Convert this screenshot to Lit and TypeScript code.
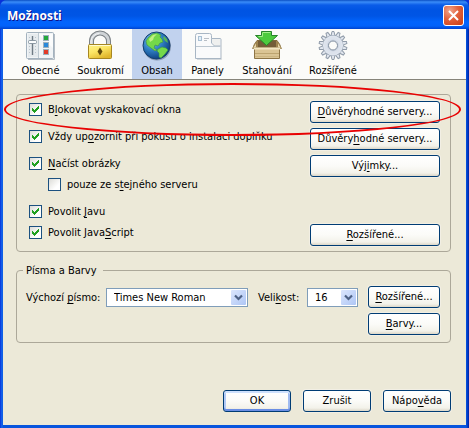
import { LitElement, html, css, svg, nothing } from "lit";
import { customElement, property, state } from "lit/decorators.js";
import { classMap } from "lit/directives/class-map.js";

/** Splits "Po_volit" style captions into text with an underlined access key. */
const caption = (text: string) => {
  const at = text.indexOf("_");
  if (at < 0) return html`${text}`;
  return html`${text.slice(0, at)}<u>${text[at + 1]}</u>${text.slice(at + 2)}`;
};

const icons: Record<string, unknown> = {
  general: svg`
    <path d="M3 29.500h26.500V4" fill="none" stroke="#b4bcc4"/>
    <rect x="1.500" y="2.500" width="27" height="26" rx="1" fill="#f1f4f6" stroke="#a3b2be"/>
    <path d="M3 4h10v23H3z" fill="#e6ebee"/>
    <path d="M13 4h15v14z" fill="#fff" opacity=".7"/>
    <path d="M13.500 3v25" stroke="#bcc8d0"/>
    <path d="M7.500 6v19" stroke="#6e7a84" stroke-width="1.400"/>
    <path d="M10.500 7v17M4.500 7v17" stroke="#bcc5cd" stroke-dasharray="1 2"/>
    <rect x="3.500" y="10.500" width="8" height="3" rx="1" fill="#fafcfd" stroke="#8b98a3"/>
    <g stroke="#9db0bd">
      <rect x="18.500" y="5.500" width="5" height="5" fill="#22a83c"/>
      <rect x="18.500" y="12.500" width="5" height="5" fill="#2888da"/>
      <rect x="18.500" y="19.500" width="5" height="5" fill="#e23a28"/>
    </g>`,
  privacy: svg`
    <defs><linearGradient id="gold" x2=".6" y2="1"><stop stop-color="#fff48c"/><stop offset=".5" stop-color="#fbe564"/><stop offset="1" stop-color="#e0b62c"/></linearGradient></defs>
    <path d="M6.500 15v-4a8.500 8 0 0 1 17 0v4" fill="none" stroke="#7b8185" stroke-width="5"/>
    <path d="M6.500 15v-4a8.500 8 0 0 1 17 0v4" fill="none" stroke="#cfd3d6" stroke-width="3"/>
    <path d="M6 14v-3a8.500 8 0 0 1 8.500-7.500" fill="none" stroke="#f3f5f6"/>
    <rect x="3.500" y="14.500" width="23" height="14" rx="1" fill="url(#gold)" stroke="#a78722"/>
    <path d="M4.500 15.500h21" stroke="#fffbd0"/>
    <path d="M15 17.500l2.500 4-2.500 4-2.500-4z" fill="#5e490c"/>`,
  content: svg`
    <defs><radialGradient id="sea" cx=".35" cy=".3" r=".75"><stop stop-color="#8cc6f2"/><stop offset=".5" stop-color="#2f7fc4"/><stop offset="1" stop-color="#0d3b7c"/></radialGradient></defs>
    <circle cx="16" cy="16.500" r="14" fill="#52617c" opacity=".5"/>
    <circle cx="15.500" cy="15.500" r="13.500" fill="url(#sea)" stroke="#14406f"/>
    <path d="M7 8l4-4 5-1 4 2-1 2 2 2 1 3-3 1-2 3-3-1-1 3 3 2-2 1-4-3-4-3-1-4z" fill="#74d84a" stroke="#3a9440" stroke-width=".6"/>
    <path d="M17 19l4-2 4 1 2 2-3 4-4 4-2-1v-4l-2-2z" fill="#74d84a" stroke="#3a9440" stroke-width=".6"/>
    <path d="M23 6l3 3 1 4-3-2-2-3z" fill="#58b458"/>
    <path d="M8 9l4-4 4-1-3 3-1 3-3 2z" fill="#d2f690" opacity=".8"/>`,
  tabs: svg`
    <path d="M3.500 28.500V5.500a2 2 0 0 1 2-2h12a2 2 0 0 1 2 2v3h8.500a1 1 0 0 1 1 1v19z" fill="#f9fafb" stroke="#a8b6c4"/>
    <path d="M20 9h8v7h-5l-3-3z" fill="#eff0ef"/>
    <path d="M19.500 8.500V13l3 3h6" fill="none" stroke="#a8b6c4"/>
    <path d="M4 16.500h24" stroke="#bcc7d0"/>
    <rect x="6.500" y="6.500" width="3" height="4" fill="#e4eff8" stroke="#a9c0d3"/>
    <path d="M12 8.500h5M12 10.500h3" stroke="#b8bec5"/>
    <path d="M5 29.500h24.500V11" fill="none" stroke="#d4d9dd"/>`,
  downloads: svg`
    <path d="M3 15L6 10.500h20l3 4.500v3H3z" fill="#a08450" stroke="#80683c"/>
    <path d="M7 11h18v7H7z" fill="#745d38"/>
    <path d="M3.500 17.500h25v11h-25z" fill="#dac494" stroke="#8d7446"/>
    <path d="M1.500 18.500l4-7v6zM30.500 18.500l-4-7v6z" fill="#e9d7aa" stroke="#9c834f"/>
    <path d="M3 18.500h26" stroke="#f2e6c2" stroke-width="2"/>
    <path d="M4 23.500h24" stroke="#bca470"/><path d="M4 26.500h24" stroke="#cbb582"/>
    <path d="M10.500 1.500h10v4h6L15.500 15.500 4.500 5.500h6z" fill="#4ccb3e" stroke="#27842b"/>
    <path d="M11.500 2.500h8M11.500 3v3.500H7.500" fill="none" stroke="#a2ef8a"/>`,
  advanced: svg`
    <g stroke="#909ba9" stroke-width="1">
      ${Array.from({ length: 14 }, (_, i) => svg`<path transform="rotate(${(i * 360) / 14} 16 15.500)" d="M14 6l1-4.500h2l1 4.500z" fill="#e2e7ef"/>`)}
    </g>
    <circle cx="16" cy="15.500" r="10" fill="#dce2ec" stroke="#9aa5b4"/>
    <circle cx="16" cy="15.500" r="9.300" fill="none" stroke="#dfe5ee" stroke-width="1.500"/>
    <circle cx="16" cy="15.500" r="6" fill="#cdd5e2"/>
    <circle cx="16" cy="15.500" r="4.500" fill="#fbfbf9" stroke="#8390a1"/>`,
};

const base = css`
  :host { box-sizing: border-box; }
  *, *::before, *::after { box-sizing: border-box; }
  u { text-decoration: underline; text-underline-offset: 2px; text-decoration-thickness: 1px; text-decoration-skip-ink: none; }
`;

@customElement("xp-button")
class XpButton extends LitElement {
  static styles = [
    base,
    css`
      :host { display: block; }
      .button {
        display: block; width: 100%; height: 22px; padding: 0 2px 1px;
        font: inherit; color: #000; text-align: center; white-space: nowrap;
        border: 1px solid #003c74; border-radius: 3px;
        background: linear-gradient(#fff, #fbfbf8 50%, #f3f2ea 85%, #dcd7c8);
        box-shadow: 0 0 0 1px #f2efe4;
      }
      .primary { box-shadow: inset 0 2px #cee0fc, inset 0 -2px #6a8ee4, inset 2px 0 #b1c9f5, inset -2px 0 #a0bbf0; }
    `,
  ];
  @property() label = "";
  @property({ type: Boolean }) primary = false;
  render() {
    return html`<button class=${classMap({ button: true, primary: this.primary })}>${caption(this.label)}</button>`;
  }
}

@customElement("xp-check")
class XpCheck extends LitElement {
  static styles = [
    base,
    css`
      :host { display: block; }
      .label { display: flex; align-items: center; gap: 6px; height: 13px; line-height: 13px; white-space: nowrap; }
      .wrap { position: relative; display: block; width: 13px; height: 13px; }
      .box {
        appearance: none; display: block; width: 13px; height: 13px; margin: 0;
        border: 1px solid #1c5180; background: linear-gradient(135deg, #dcdcd7, #fff 70%);
      }
      .tick { position: absolute; inset: 0; display: none; pointer-events: none; }
      .box:checked + .tick { display: block; }
    `,
  ];
  @property() label = "";
  @property({ type: Boolean }) checked = false;
  render() {
    return html`<label class="label">
      <span class="wrap">
        <input class="box" type="checkbox" .checked=${this.checked} />
        <svg class="tick" width="13" height="13" viewBox="0 0 13 13" shape-rendering="crispEdges"><path d="M3 5h1v1h1v1h1V6h1V5h1V4h1V3h1v3H9v1H8v1H7v1H6v1H5V9H4V8H3z" fill="#21a121" /></svg>
      </span>
      <span>${caption(this.label)}</span>
    </label>`;
  }
}

@customElement("xp-select")
class XpSelect extends LitElement {
  static styles = [
    base,
    css`
      :host { display: block; }
      .wrap { position: relative; }
      .select {
        appearance: none; display: block; width: 100%; height: 19px; padding: 0 18px 0 7px;
        font: inherit; color: #000; background: #fff; border: 1px solid #7f9db9; border-radius: 0;
      }
      .arrow { position: absolute; top: 2px; right: 2px; pointer-events: none; }
    `,
  ];
  @property() value = "";
  @property() name = "";
  render() {
    return html`<div class="wrap">
      <select class="select" aria-label=${this.name}><option>${this.value}</option></select>
      <svg class="arrow" width="15" height="15" viewBox="0 0 15 15">
        <defs><linearGradient id="f" x2="1" y2="1"><stop stop-color="#dbe6fd" /><stop offset="1" stop-color="#aec6f5" /></linearGradient></defs>
        <rect width="15" height="15" rx="1" fill="url(#f)" />
        <path d="M4 5.500l3.500 3.500L11 5.500" fill="none" stroke="#4d6185" stroke-width="2.200" />
      </svg>
    </div>`;
  }
}

interface Row { label: string; checked: boolean; button?: string; kind: string; }

@customElement("app-root")
class AppRoot extends LitElement {
  static styles = [
    base,
    css`
      :host {
        display: block; min-height: 100vh; background: #0831d9;
        font: 11px/13px "DejaVu Sans Condensed", "Noto Sans", sans-serif; color: #000;
      }
      .window {
        display: flex; flex-direction: column; min-height: 100vh; padding: 0 3px 3px;
        border-radius: 7px 7px 0 0;
        background: linear-gradient(90deg, #0831d9, #166aee 2px, #0855dd 3px, #0855dd calc(100% - 3px), #0046d5 calc(100% - 2px), #001ea0);
        border-bottom: 1px solid #00138c;
      }
      .title {
        display: flex; align-items: center; justify-content: space-between; height: 29px;
        margin: 0 -3px; padding: 2px 5px 0 7px; border-radius: 7px 7px 0 0;
        background: linear-gradient(#0b4fc4, #3a8cf8 2px, #0a5ce8 5px, #0054e3 10px, #0055e5 16px, #0264fd 22px, #0262fa 26px, #0043cf);
      }
      .name { margin: 0; color: #fff; font: bold 12px/16px "Open Sans", "Noto Sans", sans-serif; text-shadow: 1px 1px #0f1089; }
      .close {
        display: grid; place-items: center; width: 21px; height: 21px; padding: 0;
        border: 1px solid #fff; border-radius: 3px;
        background: radial-gradient(circle at 30% 25%, #f0a58c, #e2613c 45%, #c83c12);
      }
      .bar {
        display: grid; grid-template-columns: 57px 63px 50px 51px 68px 64px; justify-content: start;
        height: 51px; padding-left: 9px; background: #fbfbf9; border-bottom: 1px solid #86847a;
      }
      .tab {
        display: flex; flex-direction: column; align-items: center; gap: 2px; padding: 1px 0 0;
        border: 0; background: none; font: inherit; line-height: 14px; color: #000; white-space: nowrap;
      }
      .tab.on { background: #c1d2ee; }
      .body { position: relative; flex: 1; padding: 14px 15px 13px 13px; background: #ece9d8; }
      .group { margin: 0; padding: 0; border: 1px solid #aca899; border-radius: 4px; min-width: 0; }
      .options { padding: 6px 10px 5px 12px; }
      .row { display: flex; justify-content: space-between; align-items: flex-start; }
      .main { height: 22px; margin-bottom: 5px; }
      .last { height: 22px; }
      .check { margin-top: 2px; }
      .sub { margin: -4px 0 14px 19px; }
      .plain { margin-bottom: 6px; }
      .sub .check, .plain .check { margin-top: 0; }
      .wide { width: 130px; }
      .fonts { margin-top: 12px; padding: 0 10px 7px 9px; }
      .legend { margin-left: -3px; padding: 0 6px 0 3px; line-height: 13px; }
      .form { display: flex; justify-content: space-between; align-items: flex-start; padding-top: 9px; }
      .fields {
        display: grid; grid-template-columns: 70px 142px 39px 51px; column-gap: 10px;
        align-items: center; height: 22px; white-space: nowrap;
      }
      .stack { display: grid; gap: 5px; width: 72px; }
      .foot { display: flex; justify-content: flex-end; gap: 12px; margin-top: 47px; }
      .foot > * { width: 68px; }
      .ring {
        position: absolute; top: 3px; left: 1px; right: 5px; height: 53px;
        border: 2px solid #e80202; border-radius: 50%; pointer-events: none;
      }
    `,
  ];

  @state() private active = "content";

  private tabs = [
    ["general", "Obecné"], ["privacy", "Soukromí"], ["content", "Obsah"],
    ["tabs", "Panely"], ["downloads", "Stahování"], ["advanced", "Rozšířené"],
  ];

  private rows: Row[] = [
    { label: "B_lokovat vyskakovací okna", checked: true, button: "_Důvěryhodné servery...", kind: "main" },
    { label: "Vždy up_ozornit při pokusu o instalaci doplňku", checked: true, button: "Důvěry_hodné servery...", kind: "main" },
    { label: "_Načíst obrázky", checked: true, button: "Výj_imky...", kind: "main" },
    { label: "pouze ze s_tejného serveru", checked: false, kind: "sub" },
    { label: "Povolit _Javu", checked: true, kind: "plain" },
    { label: "Povolit Java_Script", checked: true, button: "_Rozšířené...", kind: "last" },
  ];

  render() {
    return html`
      <main class="window">
        <header class="title">
          <h1 class="name">Možnosti</h1>
          <button class="close" aria-label="Zavřít">
            <svg width="13" height="13" viewBox="0 0 13 13"><path d="M2 2l9 9M11 2l-9 9" stroke="#fff" stroke-width="2" /></svg>
          </button>
        </header>
        <nav class="bar">
          ${this.tabs.map(([id, name]) => html`
            <button class=${classMap({ tab: true, on: id === this.active })} @click=${() => (this.active = id)}>
              <svg width="32" height="32" viewBox="0 0 32 32">${icons[id]}</svg>
              <span>${name}</span>
            </button>`)}
        </nav>
        <div class="body">
          <fieldset class="group options">
            ${this.rows.map((r) => html`
              <div class="row ${r.kind}">
                <xp-check class="check" .label=${r.label} ?checked=${r.checked}></xp-check>
                ${r.button ? html`<xp-button class="wide" .label=${r.button}></xp-button>` : nothing}
              </div>`)}
          </fieldset>
          <fieldset class="group fonts">
            <legend class="legend">Písma a Barvy</legend>
            <div class="form">
              <div class="fields">
                <span>${caption("Výchozí _písmo:")}</span>
                <xp-select name="Výchozí písmo" value="Times New Roman"></xp-select>
                <span>${caption("Veli_kost:")}</span>
                <xp-select name="Velikost" value="16"></xp-select>
              </div>
              <div class="stack">
                <xp-button label="_Rozšířené..."></xp-button>
                <xp-button label="_Barvy..."></xp-button>
              </div>
            </div>
          </fieldset>
          <div class="foot">
            <xp-button primary label="OK"></xp-button>
            <xp-button label="Zrušit"></xp-button>
            <xp-button label="Nápo_věda"></xp-button>
          </div>
          <div class="ring"></div>
        </div>
      </main>`;
  }
}
